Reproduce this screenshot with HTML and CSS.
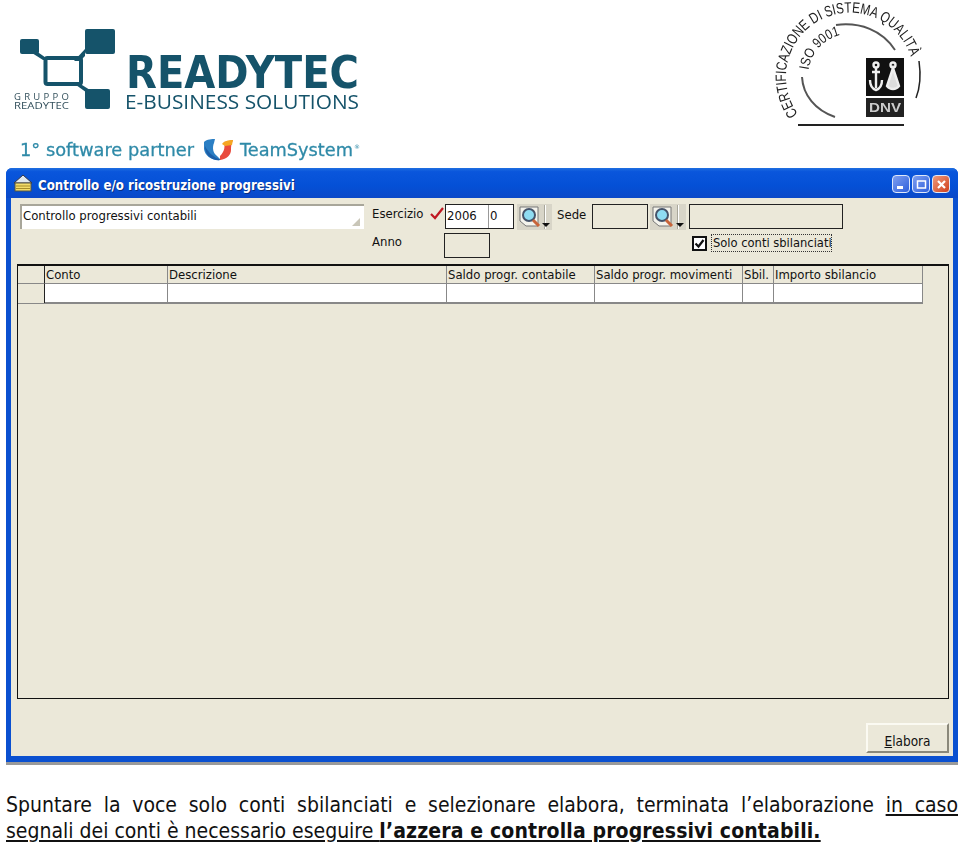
FILE: index.html
```html
<!DOCTYPE html>
<html lang="it">
<head>
<meta charset="utf-8">
<title>Controllo e/o ricostruzione progressivi</title>
<link rel="stylesheet" href="styles.css">
</head>
<body>
<header class="banner">
  <svg class="banner-art" width="960" height="168" viewBox="0 0 960 168">
    <g fill="#15536a">
      <rect x="20" y="39" width="19" height="15" rx="2"/>
      <rect x="85" y="29" width="30" height="25" rx="2"/>
      <rect x="85" y="89" width="25" height="20" rx="2"/>
      <path d="M32 53 H39 L49 60 H43 Z"/>
      <path d="M85 49 V56 L80 61 H74 Z"/>
      <path d="M76 85 H82 L90 90 V95 Z"/>
    </g>
    <rect x="45.500" y="58" width="35.500" height="26" rx="2" fill="none" stroke="#15536a" stroke-width="4"/>
    <text class="logo-main" x="126" y="88" textLength="233" lengthAdjust="spacingAndGlyphs">READYTEC</text>
    <text class="logo-sub" x="125" y="109" textLength="234" lengthAdjust="spacingAndGlyphs">E-BUSINESS SOLUTIONS</text>
    <text class="logo-tiny" x="14" y="100" textLength="55">GRUPPO</text>
    <text class="logo-tiny" x="14" y="109" textLength="55" lengthAdjust="spacingAndGlyphs">READYTEC</text>
    <text class="partner" x="20" y="156" textLength="174" lengthAdjust="spacingAndGlyphs">1° software partner</text>
    <text class="partner" x="240" y="156" textLength="113" lengthAdjust="spacingAndGlyphs">TeamSystem</text>
    <text class="partner-r" x="354" y="149">®</text>
    <path d="M204 142 C207 139 212 139 215 139 L214 143 C212 148 213 153 217 156 L221 160 C212 161 205 156 204 149 Z" fill="#2b7fc4"/>
    <path d="M205 146 C208 152 213 157 221 160 C212 161 205 156 205 146 Z" fill="#1c5fa8"/>
    <path d="M220 156 C225 151 225 146 224 142 L233 140 C231 144 231 147 231 150 C231 155 227 159 220 160 Z" fill="#e94a3c"/>
    <path d="M222 144 C224 141 228 140 233 140 L232 145 L225 146 Z" fill="#f5a623"/>
    <g class="cert">
      <path id="certArc" d="M798 114 A64 64 0 1 1 914 76" fill="none"/>
      <path id="isoArc" d="M808.500 70 A42 42 0 0 1 846 34" fill="none"/>
      <text class="cert-text" textLength="220" lengthAdjust="spacingAndGlyphs"><textPath href="#certArc">CERTIFICAZIONE DI SISTEMA QUALITÀ</textPath></text>
      <text class="iso-text" textLength="50" lengthAdjust="spacingAndGlyphs"><textPath href="#isoArc">ISO 9001</textPath></text>
      <path d="M836 25 C860 22 882 30 895 50 M802 77 C803 95 815 110 835 117" fill="none" stroke="#555" stroke-width="2"/>
      <path d="M919 61 C921 75 920 88 916 98" fill="none" stroke="#222" stroke-width="1.500"/>
      <rect x="798" y="124" width="106" height="2" fill="#222"/>
      <rect x="866" y="58" width="38" height="38" fill="#111"/>
      <rect x="866" y="98" width="38" height="19" fill="#222"/>
      <g fill="none" stroke="#eee" stroke-width="2.400">
        <circle cx="876" cy="65" r="2.500"/>
        <path d="M876 68 V88 M870 80 C870 87 873 89 876 90 C879 89 882 87 882 80 M872 72 H880"/>
        <circle cx="893" cy="65" r="2.500"/>
        <path d="M893 68 L887 86 C890 90 896 90 899 86 Z" fill="#ddd"/>
      </g>
      <text class="dnv" x="869" y="112" textLength="32" lengthAdjust="spacingAndGlyphs">DNV</text>
    </g>
  </svg>
</header>

<section class="window">
  <div class="titlebar">
    <svg class="title-icon" width="20" height="18" viewBox="0 0 20 18">
      <path d="M1 9 L10 1 L19 9 Z" fill="#dfe8ef" stroke="#334" stroke-width="1"/>
      <rect x="2" y="9" width="16" height="8" fill="#f2dc6a" stroke="#554" stroke-width="1"/>
      <path d="M3 12 H17 M3 14.500 H17" stroke="#a68c2a"/>
    </svg>
    <h1 class="title">Controllo e/o ricostruzione progressivi</h1>
    <div class="caption-buttons">
      <span class="cap cap-blue"><svg width="17" height="17" viewBox="0 0 17 17"><rect x="4" y="10" width="6" height="3" fill="#fff"/></svg></span>
      <span class="cap cap-blue"><svg width="17" height="17" viewBox="0 0 17 17"><rect x="4.500" y="5" width="8" height="7" fill="none" stroke="#fff" stroke-width="1.500"/></svg></span>
      <span class="cap cap-red"><svg width="17" height="17" viewBox="0 0 17 17"><path d="M5 5 L12 12 M12 5 L5 12" stroke="#fff" stroke-width="2.200"/></svg></span>
    </div>
  </div>

  <div class="client">
    <div class="form-row form-row-one">
      <div class="memo">Controllo progressivi contabili
        <svg class="grip" width="10" height="10" viewBox="0 0 10 10"><path d="M1 9 L9 9 L9 1 Z" fill="#c9c6b8"/></svg>
      </div>
      <span class="label label-eser">Esercizio</span>
      <svg class="check-mark" width="14" height="13" viewBox="0 0 14 13"><path d="M1 7 L5 11 L13 1" fill="none" stroke="#c01822" stroke-width="2.200"/></svg>
      <div class="field field-double"><span class="field-year">2006</span><span class="field-zero">0</span></div>
      <div class="lookup">
        <svg width="26" height="24" viewBox="0 0 26 24">
          <path d="M2 2 H20 V21 H8 L2 16 Z" fill="#f4f3ec" stroke="#777"/>
          <circle cx="11" cy="10" r="6" fill="#8fdcf2" stroke="#45536a" stroke-width="2"/>
          <path d="M15 15 L21 21" stroke="#c8643a" stroke-width="3"/>
        </svg>
        <span class="lookup-sep"></span><span class="lookup-arrow"></span>
      </div>
      <span class="label label-sede">Sede</span>
      <div class="field field-sede"></div>
      <div class="lookup lookup-sede">
        <svg width="26" height="24" viewBox="0 0 26 24">
          <path d="M2 2 H20 V21 H8 L2 16 Z" fill="#f4f3ec" stroke="#777"/>
          <circle cx="11" cy="10" r="6" fill="#8fdcf2" stroke="#45536a" stroke-width="2"/>
          <path d="M15 15 L21 21" stroke="#c8643a" stroke-width="3"/>
        </svg>
        <span class="lookup-sep"></span><span class="lookup-arrow"></span>
      </div>
      <div class="field field-desc"></div>
    </div>
    <div class="form-row form-row-two">
      <span class="label label-anno">Anno</span>
      <div class="field field-anno"></div>
      <span class="checkbox"><svg width="11" height="11" viewBox="0 0 11 11"><path d="M1.500 5.500 L4.500 8.500 L9.500 2" fill="none" stroke="#111" stroke-width="2.200"/></svg></span>
      <span class="check-label">Solo conti sbilanciati</span>
    </div>

    <div class="grid-box">
      <div class="grid-table">
        <div class="cell head c0"></div>
        <div class="cell head c1">Conto</div>
        <div class="cell head c2">Descrizione</div>
        <div class="cell head c3">Saldo progr. contabile</div>
        <div class="cell head c4">Saldo progr. movimenti</div>
        <div class="cell head c5">Sbil.</div>
        <div class="cell head c6">Importo sbilancio</div>
        <div class="cell head c0 marker"></div>
        <div class="cell body"></div>
        <div class="cell body"></div>
        <div class="cell body"></div>
        <div class="cell body"></div>
        <div class="cell body"></div>
        <div class="cell body"></div>
      </div>
    </div>

    <div class="footer-row">
      <button class="elabora" type="button"><span class="accel">E</span>labora</button>
    </div>
  </div>
</section>

<article class="note">
  <p class="line line-first">Spuntare la voce solo conti sbilanciati e selezionare elabora, terminata l’elaborazione <span class="under">in caso</span></p>
  <p class="line line-second">segnali dei conti è necessario eseguire <strong class="strong-part">l’azzera e controlla progressivi contabili.</strong></p>
</article>
</body>
</html>
```

FILE: styles.css
```css
* { box-sizing: border-box; }
html, body { margin: 0; padding: 0; }
body {
  width: 960px;
  height: 846px;
  overflow: hidden;
  background: #fff;
  font-family: "DejaVu Sans Condensed", "DejaVu Sans", sans-serif;
  color: #111;
}

/* banner */
.banner { height: 168px; }
.banner-art { display: block; filter: blur(0.3px); }
.logo-main { font: bold 45px "DejaVu Sans", sans-serif; fill: #15536a; }
.logo-sub { font: 19.500px "Open Sans", sans-serif; fill: #15536a; }
.logo-tiny { font: 9.500px "Open Sans", sans-serif; fill: #33505c; }
.partner { font: 18px "DejaVu Sans", sans-serif; fill: #2f8aa8; stroke: #2f8aa8; stroke-width: 0.3px; }
.partner-r { font: 6px "DejaVu Sans", sans-serif; fill: #2f8aa8; }
.cert-text { font: 15px "Liberation Sans", sans-serif; fill: #222; }
.iso-text { font: 14px "Liberation Sans", sans-serif; fill: #222; }
.dnv { font: bold 12px "Liberation Sans", sans-serif; fill: #ccc; }

/* window */
.window {
  width: 952px;
  height: 597px;
  margin-left: 6px;
  background: #0a50d0;
  border-radius: 6px 6px 0 0;
  border-bottom: 3px solid #9a9a9a;
  display: flex;
  flex-direction: column;
}
.titlebar {
  height: 30px;
  flex: none;
  display: flex;
  align-items: center;
  padding: 0 8px 0 7px;
  border-radius: 6px 6px 0 0;
  background: linear-gradient(#1f6fe0 0, #0a56dc 12%, #0450d6 60%, #0a48c8 100%);
}
.title-icon { flex: none; margin-right: 5px; }
.title {
  margin: 5px 0 0;
  flex: 1;
  font: bold 13.200px "DejaVu Sans Condensed", "DejaVu Sans", sans-serif;
  color: #fff;
  text-shadow: 1px 1px 0 #0a2f80;
}
.caption-buttons { display: flex; gap: 2px; margin-top: 2px; }
.cap {
  width: 18px;
  height: 18px;
  border: 1px solid #dfe8fa;
  border-radius: 4px;
  display: block;
}
.cap svg { display: block; }
.cap-blue { background: linear-gradient(135deg, #7f9ff0, #2d5fdc); }
.cap-red { background: linear-gradient(135deg, #ef9a7c, #d0401c); }

.client {
  flex: 1;
  margin: 0 5px 6px 5px;
  padding: 6px 4px 0 6px;
  background: #ebe8d9;
  display: flex;
  flex-direction: column;
}

.form-row { display: flex; align-items: center; flex: none; }
.form-row-one { height: 25px; padding-left: 3px; }
.form-row-two { height: 25px; margin-top: 4px; }

.memo {
  position: relative;
  width: 344px;
  height: 25px;
  background: #fff;
  border-top: 2px solid #a8a69a;
  border-left: 2px solid #a8a69a;
  padding-left: 1px;
  font-size: 13px;
  line-height: 20px;
  white-space: nowrap;
}
.grip { position: absolute; right: 3px; bottom: 2px; }

.label { font-size: 13px; white-space: nowrap; }
.label-eser { margin: 0 0 6px 8px; width: 58px; }
.check-mark { flex: none; margin-bottom: 7px; }
.field { border: 1px solid #222; height: 25px; flex: none; }
.field-double { display: flex; width: 69px; margin-left: 1px; background: #fff; font-size: 13px; line-height: 22px; }
.field-year { width: 43px; padding-left: 1px; border-right: 1px solid #999; }
.field-zero { padding-left: 1px; }
.lookup {
  margin-left: 3px;
  width: 35px;
  height: 26px;
  background: #d8d5c8;
  display: flex;
  align-items: center;
  flex: none;
  padding-left: 1px;
  position: relative;
}
.lookup svg { flex: none; }
.lookup-sep { width: 1px; height: 24px; background: #fff; box-shadow: -1px 0 0 #a8a69a; margin-left: 1px; }
.lookup-arrow {
  position: absolute;
  right: 2px;
  bottom: 3px;
  width: 0;
  height: 0;
  border: 4px solid transparent;
  border-top: 4px solid #111;
  border-bottom: 0;
}
.label-sede { margin: 0 0 5px 5px; width: 35px; }
.field-sede { width: 56px; }
.lookup-sede { margin-left: 2px; width: 36px; }
.field-desc { width: 154px; margin-left: 3px; }

.label-anno { margin: 0 0 8px 355px; width: 72px; }
.field-anno { width: 46px; }
.checkbox {
  margin: 0 0 5px 202px;
  width: 15px;
  height: 15px;
  border: 2px solid #111;
  background: #fff;
  display: block;
  flex: none;
}
.checkbox svg { display: block; }
.check-label {
  margin: 0 0 5px 4px;
  width: 121px;
  height: 18px;
  border: 1px dotted #333;
  padding-left: 1px;
  font-size: 12.800px;
  line-height: 16px;
  white-space: nowrap;
}

.grid-box {
  margin-top: 6px;
  height: 435px;
  border: 1px solid #111;
  border-top-width: 2px;
  flex: none;
  width: 932px;
}
.grid-table {
  display: grid;
  width: 905px;
  grid-template-columns: 27px 123px 279px 148px 148px 31px 149px;
  grid-template-rows: 18px 19px;
  border-bottom: 1px solid #888;
  border-right: 1px solid #888;
}
.cell {
  border-right: 1px solid #888;
  border-bottom: 1px solid #888;
  font-size: 13px;
  line-height: 17px;
  padding-left: 1px;
  white-space: nowrap;
  overflow: hidden;
}
.head { background: #ebe8d9; }
.c0 { border-right-color: #222; }
.marker { border-bottom: 0; }
.body { background: #fff; }

.footer-row {
  display: flex;
  justify-content: flex-end;
  margin-top: 24px;
}
.elabora {
  width: 83px;
  height: 30px;
  padding: 6px 0 0;
  background: #ebe8d9;
  border: 0;
  border-top: 2px solid #fbfaf2;
  border-left: 2px solid #fbfaf2;
  border-right: 2px solid #8a887a;
  border-bottom: 2px solid #8a887a;
  font: 13.500px "DejaVu Sans Condensed", "DejaVu Sans", sans-serif;
  color: #111;
}
.accel { text-decoration: underline; }

/* note */
.note { margin: 27px 2px 0 6px; }
.line {
  margin: 0;
  font-size: 21px;
  line-height: 26px;
  white-space: normal;
}
.line-first { text-align: justify; text-align-last: justify; }
.line-second { text-decoration: underline; white-space: nowrap; }
.strong-part { letter-spacing: 0.13px; }
.under { text-decoration: underline; }
```
